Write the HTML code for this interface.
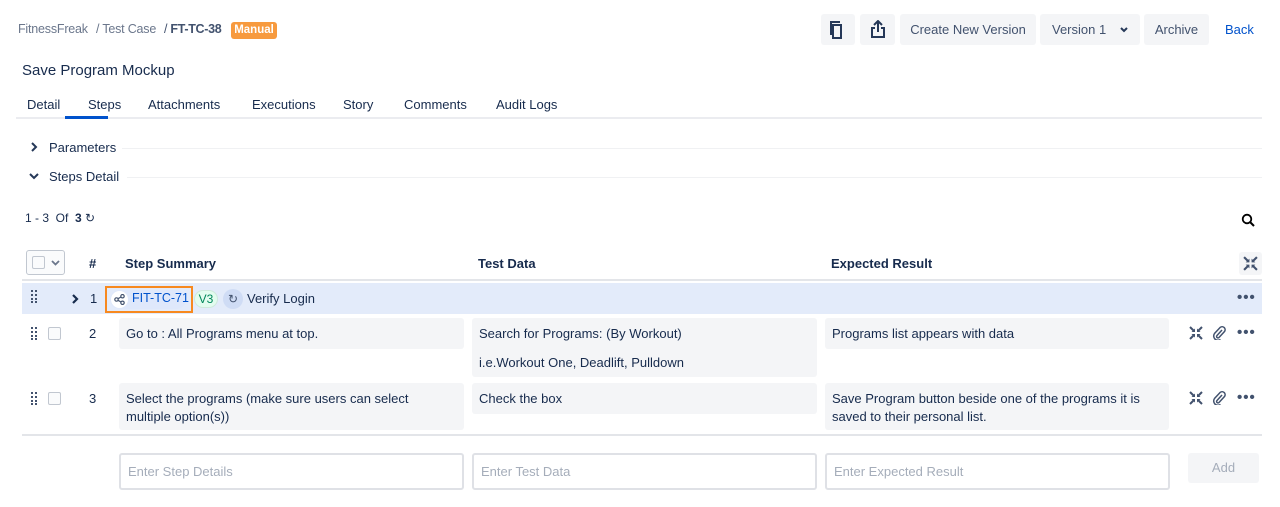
<!DOCTYPE html>
<html><head><meta charset="utf-8"><style>
*{box-sizing:border-box;margin:0;padding:0}
body{width:1280px;height:507px;background:#fff;font-family:"Liberation Sans",sans-serif;color:#172b4d;position:relative;overflow:hidden;font-size:13px}
.a{position:absolute;white-space:nowrap}
.btn{position:absolute;background:#f4f5f7;border-radius:3px;top:14px;height:31px;color:#42526e;font-size:13px;line-height:31px;text-align:center}
.cell{position:absolute;background:#f4f5f7;border-radius:3px;padding:7px 7px;font-size:13px;line-height:18px;color:#172b4d}
.inp{position:absolute;top:453px;height:37px;border:2px solid #dfe1e6;border-radius:3px;color:#a5adba;font-size:13px;line-height:33px;padding-left:7px}
.th{position:absolute;top:256px;font-weight:bold;font-size:13px}
.line{position:absolute;height:1px;background:#dfe1e6}
.dots{position:absolute;font-size:15px;font-weight:bold;color:#42526e;letter-spacing:1px}
.cb{position:absolute;width:13px;height:13px;border:1.5px solid #c1c7d0;border-radius:2px;background:#fafbfc}
</style></head><body>
<div class="a" style="left:18px;top:22px;color:#6b778c;font-size:12.5px;letter-spacing:-0.2px">FitnessFreak</div>
<div class="a" style="left:96px;top:22px;color:#6b778c;font-size:12.5px;letter-spacing:-0.2px">/ Test Case</div>
<div class="a" style="left:164px;top:22px;color:#42526e;font-size:12.5px;letter-spacing:-0.3px">/ <b>FT-TC-38</b></div>
<div class="a" style="left:231px;top:22px;width:46px;height:17px;background:#f79a3e;border-radius:3px;color:#fff;font-weight:bold;font-size:11.5px;line-height:17px;text-align:center">Manual</div>

<div class="btn" style="left:821px;width:34px"><svg width="16" height="18" viewBox="0 0 16 18" style="margin-top:7px"><path d="M3 4h8v13H3z" fill="none" stroke="#253858" stroke-width="2"/><path d="M1 14V1h9" fill="none" stroke="#253858" stroke-width="2"/></svg></div>
<div class="btn" style="left:860px;width:35px"><svg width="16" height="18" viewBox="0 0 16 18" style="margin-top:6px"><path d="M8 12V2M4 5l4-4 4 4M5 8H2v9h12V8h-3" fill="none" stroke="#253858" stroke-width="2"/></svg></div>
<div class="btn" style="left:900px;width:136px">Create New Version</div>
<div class="btn" style="left:1040px;width:100px;text-align:left;padding-left:12px">Version 1 <svg width="10" height="8" viewBox="0 0 10 8" style="margin-left:9px"><path d="M2 2l3 3 3-3" fill="none" stroke="#253858" stroke-width="2"/></svg></div>
<div class="btn" style="left:1144px;width:65px">Archive</div>
<div class="a" style="left:1225px;top:22px;color:#0052cc;font-size:13px">Back</div>

<div class="a" style="left:22px;top:62px;font-size:15px;color:#172b4d">Save Program Mockup</div>
<div class="a" style="left:27px;top:97px">Detail</div>
<div class="a" style="left:88px;top:97px">Steps</div>
<div class="a" style="left:148px;top:97px">Attachments</div>
<div class="a" style="left:252px;top:97px">Executions</div>
<div class="a" style="left:343px;top:97px">Story</div>
<div class="a" style="left:404px;top:97px">Comments</div>
<div class="a" style="left:496px;top:97px">Audit Logs</div>
<div class="line" style="left:16px;top:117px;width:1246px;height:2px;background:#ebecf0"></div>
<div class="a" style="left:65px;top:116px;width:43px;height:3px;background:#0052cc"></div>

<svg class="a" style="left:30px;top:142px" width="8" height="10" viewBox="0 0 8 10"><path d="M2 1l4 4-4 4" fill="none" stroke="#253858" stroke-width="2"/></svg>
<div class="a" style="left:49px;top:140px">Parameters</div>
<div class="line" style="left:122px;top:148px;width:1140px;background:#f0f1f3"></div>
<svg class="a" style="left:29px;top:172px" width="10" height="8" viewBox="0 0 10 8"><path d="M1 2l4 4 4-4" fill="none" stroke="#253858" stroke-width="2"/></svg>
<div class="a" style="left:49px;top:169px">Steps Detail</div>
<div class="line" style="left:127px;top:177px;width:1135px;background:#f0f1f3"></div>

<div class="a" style="left:25px;top:211px;font-size:12px">1 - 3 &nbsp;Of &nbsp;<b>3</b> <span style="font-size:12px">&#x21BB;</span></div>
<svg class="a" style="left:1241px;top:213px" width="14" height="14" viewBox="0 0 14 14"><circle cx="6" cy="6" r="4.3" fill="none" stroke="#000" stroke-width="1.8"/><path d="M9 9l4 4" stroke="#000" stroke-width="2"/></svg>

<div class="a" style="left:26px;top:250px;width:39px;height:25px;border:1.5px solid #c1c7d0;border-radius:3px;background:#fafbfc"></div>
<div class="cb" style="left:32px;top:256px"></div>
<svg class="a" style="left:51px;top:260px" width="9" height="6" viewBox="0 0 9 6"><path d="M1 1l3.5 3.5L8 1" fill="none" stroke="#6b778c" stroke-width="1.8"/></svg>
<div class="th" style="left:89px">#</div>
<div class="th" style="left:125px">Step Summary</div>
<div class="th" style="left:478px">Test Data</div>
<div class="th" style="left:831px">Expected Result</div>
<div class="a" style="left:1239px;top:252px;width:23px;height:23px;background:#f4f5f7;border-radius:3px"></div>
<svg class="a" style="left:1243px;top:256px" width="15" height="15" viewBox="0 0 14 14"><g stroke="#42526e" stroke-width="2" fill="none"><path d="M1 1l4 4M13 1l-4 4M1 13l4-4M13 13l-4-4"/></g><g fill="#42526e"><path d="M6 6H2.5L6 2.5zM8 6h3.5L8 2.5zM6 8H2.5L6 11.5zM8 8h3.5L8 11.5z"/></g></svg>
<div class="line" style="left:22px;top:279px;width:1240px;height:2px;background:#e3e5e9"></div>

<div class="a" style="left:22px;top:283px;width:1240px;height:31px;background:#e3ebfa"></div>
<svg class="a" style="left:31px;top:290px" width="7" height="13" viewBox="0 0 7 13"><g fill="#42526e"><rect x="0" y="0" width="2" height="2"/><rect x="4" y="0" width="2" height="2"/><rect x="0" y="4" width="2" height="2"/><rect x="4" y="4" width="2" height="2"/><rect x="0" y="8" width="2" height="2"/><rect x="4" y="8" width="2" height="2"/><rect x="0" y="11" width="2" height="2"/><rect x="4" y="11" width="2" height="2"/></g></svg>
<svg class="a" style="left:71px;top:294px" width="8" height="10" viewBox="0 0 8 10"><path d="M2 1l4 4-4 4" fill="none" stroke="#172b4d" stroke-width="2.2"/></svg>
<div class="a" style="left:90px;top:291px">1</div>
<div class="a" style="left:105px;top:286px;width:88px;height:27px;border:2px solid #f7891f;"></div>
<div class="a" style="left:110px;top:290px;width:76px;height:19px;background:#dfe8fb;border-radius:10px"></div>
<div class="a" style="left:111px;top:291px;width:17px;height:17px;background:#fff;border-radius:50%"></div>
<svg class="a" style="left:114px;top:294px" width="11" height="11" viewBox="0 0 11 11"><g fill="none" stroke="#42526e" stroke-width="1.2"><circle cx="2.5" cy="5.5" r="1.7"/><circle cx="8.5" cy="2.2" r="1.7"/><circle cx="8.5" cy="8.8" r="1.7"/><path d="M4 4.7l3-1.7M4 6.3l3 1.7"/></g></svg>
<div class="a" style="left:132px;top:291px;color:#0052cc;font-size:12.5px">FIT-TC-71</div>
<div class="a" style="left:194px;top:290px;width:24px;height:18px;background:#e3fcef;border:1px solid #cfe9dc;border-radius:9px;color:#00875a;font-size:12px;text-align:center;line-height:16px">V3</div>
<div class="a" style="left:223px;top:289px;width:20px;height:20px;background:#cfdcf5;border-radius:50%;font-size:12px;text-align:center;line-height:20px;color:#42526e">&#x21BB;</div>
<div class="a" style="left:247px;top:291px">Verify Login</div>
<div class="dots" style="left:1237px;top:289px">&bull;&bull;&bull;</div>

<svg class="a" style="left:31px;top:327px" width="7" height="13" viewBox="0 0 7 13"><g fill="#42526e"><rect x="0" y="0" width="2" height="2"/><rect x="4" y="0" width="2" height="2"/><rect x="0" y="4" width="2" height="2"/><rect x="4" y="4" width="2" height="2"/><rect x="0" y="8" width="2" height="2"/><rect x="4" y="8" width="2" height="2"/><rect x="0" y="11" width="2" height="2"/><rect x="4" y="11" width="2" height="2"/></g></svg>
<div class="cb" style="left:48px;top:327px"></div>
<div class="a" style="left:89px;top:326px">2</div>
<div class="cell" style="left:119px;top:318px;width:345px;height:31px">Go to : All Programs menu at top.</div>
<div class="cell" style="left:472px;top:318px;width:345px;height:59px">Search for Programs: (By Workout)<div style="margin-top:11px">i.e.Workout One, Deadlift, Pulldown</div></div>
<div class="cell" style="left:825px;top:318px;width:344px;height:31px">Programs list appears with data</div>
<svg class="a" style="left:1189px;top:326px" width="14" height="14" viewBox="0 0 14 14"><g stroke="#42526e" stroke-width="2"><path d="M1 1l4 4M13 1l-4 4M1 13l4-4M13 13l-4-4"/></g><g fill="#42526e"><path d="M6 6H2.5L6 2.5zM8 6h3.5L8 2.5zM6 8H2.5L6 11.5zM8 8h3.5L8 11.5z"/></g></svg>
<svg class="a" style="left:1212px;top:325px" width="14" height="15" viewBox="0 0 14 15"><path d="M10 5l-5 5.5a1.4 1.4 0 0 0 2 2l5.5-6a3 3 0 0 0-4.2-4.2L2.5 8.5a4.3 4.3 0 0 0 6 6" fill="none" stroke="#42526e" stroke-width="1.5"/></svg>
<div class="dots" style="left:1237px;top:324px">&bull;&bull;&bull;</div>

<svg class="a" style="left:31px;top:392px" width="7" height="13" viewBox="0 0 7 13"><g fill="#42526e"><rect x="0" y="0" width="2" height="2"/><rect x="4" y="0" width="2" height="2"/><rect x="0" y="4" width="2" height="2"/><rect x="4" y="4" width="2" height="2"/><rect x="0" y="8" width="2" height="2"/><rect x="4" y="8" width="2" height="2"/><rect x="0" y="11" width="2" height="2"/><rect x="4" y="11" width="2" height="2"/></g></svg>
<div class="cb" style="left:48px;top:392px"></div>
<div class="a" style="left:89px;top:391px">3</div>
<div class="cell" style="left:119px;top:383px;width:345px;height:47px">Select the programs (make sure users can select<br>multiple option(s))</div>
<div class="cell" style="left:472px;top:383px;width:345px;height:31px">Check the box</div>
<div class="cell" style="left:825px;top:383px;width:344px;height:47px">Save Program button beside one of the programs it is<br>saved to their personal list.</div>
<svg class="a" style="left:1189px;top:391px" width="14" height="14" viewBox="0 0 14 14"><g stroke="#42526e" stroke-width="2"><path d="M1 1l4 4M13 1l-4 4M1 13l4-4M13 13l-4-4"/></g><g fill="#42526e"><path d="M6 6H2.5L6 2.5zM8 6h3.5L8 2.5zM6 8H2.5L6 11.5zM8 8h3.5L8 11.5z"/></g></svg>
<svg class="a" style="left:1212px;top:390px" width="14" height="15" viewBox="0 0 14 15"><path d="M10 5l-5 5.5a1.4 1.4 0 0 0 2 2l5.5-6a3 3 0 0 0-4.2-4.2L2.5 8.5a4.3 4.3 0 0 0 6 6" fill="none" stroke="#42526e" stroke-width="1.5"/></svg>
<div class="dots" style="left:1237px;top:389px">&bull;&bull;&bull;</div>
<div class="line" style="left:22px;top:434px;width:1240px;height:2px;background:#e3e5e9"></div>

<div class="inp" style="left:119px;width:345px">Enter Step Details</div>
<div class="inp" style="left:472px;width:345px">Enter Test Data</div>
<div class="inp" style="left:825px;width:345px">Enter Expected Result</div>
<div class="a" style="left:1188px;top:453px;width:71px;height:30px;background:#f4f5f7;border-radius:3px;color:#a5adba;text-align:center;line-height:30px">Add</div>
</body></html>
